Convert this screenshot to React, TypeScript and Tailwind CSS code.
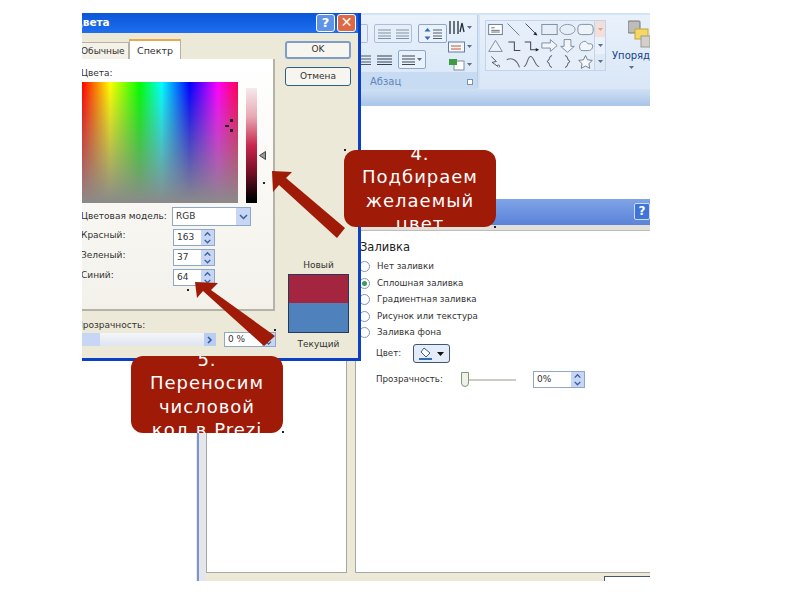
import type { ReactNode } from 'react'

const shapes: ReactNode[] = [
    <><rect x="2" y="2" width="16" height="12" fill="#fff" stroke="#5b6b7d" /><path d="M5 6h4M5 9h10M5 11h10" stroke="#556" /></>,
    <path d="M3 1l14 14" stroke="#5f6f80" />,
    <><path d="M3 1l13 13" stroke="#334" /><path d="M17 15l-5-1 3-3z" fill="#223" /></>,
    <rect x="1" y="2" width="18" height="12" fill="#e6eef8" stroke="#6e8296" />,
    <ellipse cx="10" cy="8" rx="9" ry="6" fill="#e6eef8" stroke="#7d8c9c" />,
    <rect x="1" y="2" width="18" height="12" rx="4" fill="#eef3fa" stroke="#6e8296" />,
    <path d="M10 2l8 13H2z" fill="#eef3fa" stroke="#6e8296" />,
    <path d="M4 4h7v10h7" fill="none" stroke="#445" strokeWidth="1.2" />,
    <><path d="M2 4h7v9h7" fill="none" stroke="#445" strokeWidth="1.2" /><path d="M19 13l-4-2v4z" fill="#223" /></>,
    <path d="M1 5h10V1l8 7-8 7v-4H1z" fill="#f2f6fb" stroke="#6e8296" />,
    <path d="M6 1h8v8h4l-8 7-8-7h4z" fill="#f2f6fb" stroke="#6e8296" />,
    <path d="M3 9c0-4 4-6 7-6l3 3h3c2 0 3 2 2 5-1 2-3 3-5 3H6c-2 0-3-2-3-5z" fill="#f2f6fb" stroke="#6e8296" />,
    <path d="M5 2l6 6-5 1 7 5M12 13c2-2 4 0 2 2" fill="none" stroke="#445" />,
    <path d="M2 6c6-3 12 0 15 9" fill="none" stroke="#667" strokeWidth="1.2" />,
    <path d="M1 14c4 0 4-12 8-12s5 12 10 12" fill="none" stroke="#667" strokeWidth="1.2" />,
    <path d="M13 1c-4 0-2 6-6 7 4 1 2 7 6 7" fill="none" stroke="#445" strokeWidth="1.1" />,
    <path d="M7 1c4 0 2 6 6 7-4 1-2 7-6 7" fill="none" stroke="#445" strokeWidth="1.1" />,
    <path d="M10 1l2.4 5 5.6.7-4 3.8 1 5.5-5-2.7L5 16l1-5.5-4-3.8 5.6-.7z" fill="#f6f8fb" stroke="#5f6f80" />,
]

function Lines({ w = 14, dark = false }: { w?: number; dark?: boolean }) {
    return (
        <svg width={w} height="10" viewBox="0 0 14 10" preserveAspectRatio="none">
            <path d="M0 1h14M0 4h14M0 7h14M0 9.500h14" stroke={dark ? '#33404f' : '#7b8b9c'} />
        </svg>
    )
}

function Caret({ color = '#5c6f87' }: { color?: string }) {
    return (
        <svg width="5" height="3" viewBox="0 0 5 3" className="shrink-0"><path d="M0 0h5L2.500 3z" fill={color} /></svg>
    )
}

function SpinInput({ value, className }: { value: string; className: string }) {
    return (
        <div className={`flex items-center justify-between bg-white border border-[#8fa6c6] ${className}`}>
            <span className="pl-[3px] text-[9px] text-[#333]">{value}</span>
            <div className="flex flex-col h-full w-[13px] bg-[#c6d6f4]">
                <svg className="flex-1" viewBox="0 0 12 8"><path d="M3 6l3-3 3 3" fill="none" stroke="#3c5f96" strokeWidth="1.500" /></svg>
                <svg className="flex-1" viewBox="0 0 12 8"><path d="M3 2l3 3 3-3" fill="none" stroke="#3c5f96" strokeWidth="1.500" /></svg>
            </div>
        </div>
    )
}

function Callout({ className, lines }: { className: string; lines: string[] }) {
    return (
        <div className={`absolute z-30 w-[152px] h-[77px] rounded-[12px] bg-[#a01a08] overflow-hidden flex flex-col items-center justify-center text-white text-[18px] leading-[23.500px] tracking-[1px] text-center ${className}`}>
            {lines.map((l) => (
                <div key={l} className="shrink-0 whitespace-nowrap">{l}</div>
            ))}
        </div>
    )
}

function Speck({ className }: { className: string }) {
    return <div className={`absolute z-40 w-[2px] h-[2px] bg-[#222] ${className}`} />
}

function Ribbon() {
    return (
        <div className="absolute left-[361px] top-[13px] w-[289px] h-[93px] overflow-hidden flex flex-col bg-[#d3e3f6]">
            <div className="h-[76px] flex gap-[2px] pt-[2px]">
                {/* Абзац */}
                <div className="w-[117px] shrink-0 flex flex-col rounded-b-[3px] bg-gradient-to-b from-[#e9f1fb] to-[#d9e7f7] border-r border-[#b9cde6]">
                    <div className="h-[60px] flex">
                        <div className="w-[87px] flex flex-col gap-[7px] pt-[9px]">
                            <div className="flex gap-[6px] h-[19px]">
                                <div className="w-[7px] bg-[#e6eff9] border border-l-0 border-[#a9bed8] rounded-r-[2px]" />
                                <div className="w-[38px] flex items-center justify-around bg-[#e6eff9] border border-[#a9bed8] rounded-[2px]">
                                    <Lines w={13} /><Lines w={13} />
                                </div>
                                <div className="w-[29px] flex items-center justify-center gap-[2px] bg-[#e9f1fb] border border-[#8da7c8] rounded-[2px]">
                                    <svg width="7" height="14" viewBox="0 0 7 14"><path d="M3.500 1l3 3.500H.5zM3.500 13l3-3.500H.5z" fill="#2f6bb5" /></svg>
                                    <Lines w={9} dark />
                                </div>
                            </div>
                            <div className="flex h-[19px] items-center gap-[6px]">
                                <Lines w={10} dark />
                                <Lines w={15} dark />
                                <div className="w-[28px] h-full flex items-center justify-center gap-[2px] bg-[#e9f1fb] border border-[#8da7c8] rounded-[2px]">
                                    <Lines w={13} dark />
                                    <Caret />
                                </div>
                            </div>
                        </div>
                        <div className="flex-1 flex flex-col justify-between pt-[5px] pb-[1px]">
                            <div className="flex items-center gap-[2px]">
                                <svg width="17" height="15" viewBox="0 0 17 15"><path d="M2 1v13M6 1v13M10 1v13M14 3l-2 9M14 3l2 9" stroke="#26303d" strokeWidth="1.300" fill="none" /></svg>
                                <Caret />
                            </div>
                            <div className="flex items-center gap-[2px]">
                                <svg width="17" height="13" viewBox="0 0 17 13"><rect x=".5" y="2" width="16" height="10" fill="#f4f7fb" stroke="#5e7ea6" /><path d="M3 6h10M3 9h10" stroke="#c2592f" /></svg>
                                <Caret />
                            </div>
                            <div className="flex items-center gap-[2px]">
                                <svg width="17" height="14" viewBox="0 0 17 14"><rect x="6" y="4" width="10" height="9" fill="#fff" stroke="#7d8fa3" /><path d="M1 2h8v6H1z" fill="#3e9c43" /></svg>
                                <Caret />
                            </div>
                        </div>
                    </div>
                    <div className="flex-1 flex items-center justify-between pl-[9px] pr-[4px] pt-[2px] bg-[#c7dbf3] text-[10px] text-[#5d87b8]">
                        <span>Абзац</span>
                        <div className="w-[6px] h-[6px] border border-[#7d92ad] bg-white" />
                    </div>
                </div>
                {/* Рисование */}
                <div className="flex-1 min-w-0 flex pl-[5px] pt-[5px] bg-gradient-to-b from-[#e9f1fb] to-[#d9e7f7]">
                    <div className="flex h-[51px] shrink-0">
                        <div className="w-[110px] grid grid-cols-6 bg-[#e5eef9] border border-[#c3d4ea]">
                            {shapes.map((s, i) => (
                                <svg key={i} className="w-[17px] h-[15px] m-auto" viewBox="0 0 20 16">{s}</svg>
                            ))}
                        </div>
                        <div className="w-[11px] flex flex-col items-stretch border border-l-0 border-[#c3d4ea]">
                            <div className="flex-1 bg-[#f3dfd9] flex items-center justify-center"><Caret color="#d9a79a" /></div>
                            <div className="flex-1 bg-[#eaf1fa] flex items-center justify-center"><Caret /></div>
                            <div className="flex-1 bg-[#dfe9f6] flex items-center justify-center"><Caret /></div>
                        </div>
                    </div>
                    <div className="flex-1 min-w-0 pl-[6px] overflow-hidden flex flex-col items-center">
                        <svg className="self-end shrink-0" width="22" height="28" viewBox="0 0 22 28">
                            <rect x="0" y="1" width="12" height="12" rx="1" fill="#bcbcbc" stroke="#777" />
                            <rect x="7" y="9" width="13" height="10" fill="#f4d765" stroke="#c4a634" />
                            <rect x="13" y="16" width="9" height="11" fill="#d3cfc9" stroke="#999" />
                        </svg>
                        <span className="text-[10px] leading-[12px] text-[#15428b] whitespace-nowrap mt-[2px] self-start">Упорядочить</span>
                        <div className="mt-[4px]"><Caret /></div>
                    </div>
                </div>
            </div>
            <div className="flex-1 bg-gradient-to-b from-[#cfe0f5] to-[#a9c5e8]" />
        </div>
    )
}

function FormatWindow() {
    const fills = [
        { label: 'Нет заливки', on: false },
        { label: 'Сплошная заливка', on: true },
        { label: 'Градиентная заливка', on: false },
        { label: 'Рисунок или текстура', on: false },
        { label: 'Заливка фона', on: false },
    ]
    return (
        <div className="absolute left-[196px] top-[199px] w-[454px] h-[382px] flex flex-col overflow-hidden">
            <div className="h-[26px] shrink-0 flex justify-end items-center bg-gradient-to-b from-[#7fa3e6] to-[#5b83d8]">
                <div className="w-[16px] h-[17px] mb-[2px] rounded-[2px] bg-[#3f74d8] border border-[#cfdcf6] text-white text-[12px] font-bold leading-[15px] text-center">?</div>
            </div>
            <div className="h-[6px] shrink-0 bg-[#e2e0d8] border-b border-[#bdbdb5]" />
            <div className="flex-1 flex min-h-0 bg-[#ece9d8] pb-[8px]">
                <div className="w-[9px] border-l-[2px] border-[#7d94d2] bg-[#e4e6ec] ml-[1px] -mb-[8px]" />
                <div className="w-[141px] bg-white border-l border-b border-r border-[#a5a9a0]" />
                <div className="w-[8px]" />
                <div className="flex-1 bg-white border-l border-b border-[#a5a9a0] pl-[4px] pt-[9px] text-[8.700px] text-[#333]">
                    <div className="text-[11.500px] leading-[14px] text-[#222] mb-[7px]">Заливка</div>
                    <div className="flex flex-col gap-[5px]">
                        {fills.map((f) => (
                            <div key={f.label} className="flex items-center gap-[7px] h-[11.500px] -ml-[1px]">
                                <div className="w-[11px] h-[11px] rounded-full bg-white border border-[#8597a8] flex items-center justify-center">
                                    {f.on && <div className="w-[5px] h-[5px] rounded-full bg-[#3f9a55]" />}
                                </div>
                                <span className="whitespace-nowrap">{f.label}</span>
                            </div>
                        ))}
                    </div>
                    <div className="flex items-center mt-[5px] h-[20px] pl-[16px]">
                        <span className="w-[37px]">Цвет:</span>
                        <div className="w-[37px] h-[19px] flex items-center justify-around px-[3px] rounded-[3px] bg-[#e3ecf8] border border-[#43556b]">
                            <svg width="15" height="13" viewBox="0 0 15 13"><path d="M5 1l6 5-4 4-5-5z" fill="#fff" stroke="#3a5f8e" /><path d="M0 11h13v2H0z" fill="#2f6fb5" /></svg>
                            <svg width="7" height="4" viewBox="0 0 7 4"><path d="M0 0h7L3.500 4z" fill="#111" /></svg>
                        </div>
                    </div>
                    <div className="flex items-center mt-[7px] h-[18px] pl-[16px]">
                        <span className="w-[85px] whitespace-nowrap">Прозрачность:</span>
                        <div className="relative w-[55px] h-[2px] bg-[#c9cdc4]">
                            <div className="absolute left-[0px] -top-[7px] w-[8px] h-[15px] bg-[#eef2e8] border border-[#7f9a74] rounded-b-[4px]" />
                        </div>
                        <SpinInput value="0%" className="ml-[17px] w-[52px] h-[17px]" />
                    </div>
                </div>
            </div>
            <div className="absolute right-0 bottom-0 w-[46px] h-[5px] border-t border-l border-[#44586a] bg-white" />
        </div>
    )
}

function ColorDialog() {
    return (
        <div className="absolute z-10 left-[82px] top-[13px] w-[279px] h-[348px] overflow-hidden flex flex-col bg-[#ece9d8] border-r-[3px] border-b-[3px] border-[#0b3fc4] text-[9px] text-[#333]">
            <div className="h-[20px] shrink-0 -mr-[3px] flex items-center justify-between bg-gradient-to-b from-[#0a55d8] to-[#1f6ff0]">
                <span className="-ml-[9px] text-[10.500px] font-bold text-white whitespace-nowrap">Цвета</span>
                <div className="flex gap-[2px] mr-[5px]">
                    <div className="w-[19px] h-[18px] rounded-[3px] bg-[#5f93e8] border border-white text-white text-[13px] font-bold leading-[16px] text-center">?</div>
                    <div className="w-[19px] h-[18px] rounded-[3px] bg-[#dd6a45] border border-white text-white text-[14px] font-bold leading-[15px] text-center">✕</div>
                </div>
            </div>
            <div className="flex-1 relative flex flex-col pt-[6px]">
                <div className="flex h-[20px] items-end">
                    <div className="w-[48px] h-[17px] -ml-[1px] bg-[#f3f1e8] border-r border-t border-[#b6b3a6] whitespace-nowrap leading-[16px]">Обычные</div>
                    <div className="w-[52px] h-[20px] text-center leading-[20px] bg-white border-t-2 border-x border-t-[#e8a84c] border-x-[#b6b3a6] text-[9.500px]">Спектр</div>
                </div>
                <div className="w-[193px] h-[252px] flex flex-col border-r-2 border-b-2 border-[#b5b3a8] bg-gradient-to-b from-white to-[#f3f1ea]">
                    <div className="h-[23px] pt-[9px] -ml-[1px] leading-[11px]">Цвета:</div>
                    <div className="flex h-[121px]">
                        <div className="relative w-[156px] h-[121px] bg-[linear-gradient(to_right,#ff0000_0%,#ffff00_18%,#00ff00_37%,#00ffff_51%,#0000ff_69%,#ff00ff_87%,#ff0050_100%)]">
                            <div className="absolute inset-0 bg-gradient-to-b from-transparent to-[#8a8a8a]" />
                            <div className="absolute left-[143px] top-[37px] w-[9px] h-[14px]">
                                <div className="absolute left-[5px] top-0 w-[3px] h-[3px] bg-[#222]" />
                                <div className="absolute left-0 top-[6px] w-[4px] h-[2px] bg-[#222]" />
                                <div className="absolute left-[5px] top-[10px] w-[3px] h-[3px] bg-[#222]" />
                            </div>
                        </div>
                        <div className="relative ml-[8px] mt-[6px] w-[11px] h-[115px] bg-[linear-gradient(to_bottom,#f6e9ec_0%,#e8a8b4_25%,#c8284c_50%,#7a1026_72%,#000000_97%)]">
                            <svg className="absolute left-[13px] top-[63px]" width="7" height="9" viewBox="0 0 7 9"><path d="M6.500 .5v8L.5 4.500z" fill="#999" stroke="#444" /></svg>
                        </div>
                    </div>
                    <div className="flex items-center justify-between w-[170px] h-[19px] mt-[4px] -ml-[1px]">
                        <span className="whitespace-nowrap">Цветовая модель:</span>
                        <div className="w-[79px] h-[19px] flex items-center justify-between bg-white border border-[#8fa6c6]">
                            <span className="pl-[3px]">RGB</span>
                            <div className="w-[14px] h-full bg-[#c6d6f4] flex items-center justify-center">
                                <svg width="9" height="6" viewBox="0 0 9 6"><path d="M1 1l3.500 3.500L8 1" fill="none" stroke="#3c5f96" strokeWidth="1.500" /></svg>
                            </div>
                        </div>
                    </div>
                    {['Красный:', 'Зеленый:', 'Синий:'].map((l, i) => (
                        <div key={l} className="flex items-start h-[17px] mt-[3px]">
                            <span className="w-[91px] leading-[12px] -ml-[1px] mr-[1px]">{l}</span>
                            <SpinInput value={['163', '37', '64'][i]} className="w-[42px] h-[17px]" />
                        </div>
                    ))}
                </div>
                <div className="mt-[9px] leading-[11px] -ml-[6px] whitespace-nowrap">Прозрачность:</div>
                <div className="flex items-center mt-[1px]">
                    <div className="w-[134px] h-[13px] flex justify-between items-center bg-gradient-to-b from-[#f4f6fa] to-[#dfe4ee]">
                        <div className="w-[18px] h-full bg-[#c6d6f4]" />
                        <div className="w-[12px] h-full bg-[#b9ccf2] flex items-center justify-center">
                            <svg width="6" height="8" viewBox="0 0 6 8"><path d="M1 1l3 3-3 3" fill="none" stroke="#2f5595" strokeWidth="1.500" /></svg>
                        </div>
                    </div>
                    <SpinInput value="0 %" className="ml-[8px] w-[52px] h-[15px]" />
                </div>
                <div className="absolute left-[203px] top-[8px] w-[66px] h-[18px] flex items-center justify-center rounded-[3px] bg-[#f6f5ef] border-2 border-[#7f9dcb]">OK</div>
                <div className="absolute left-[203px] top-[34px] w-[66px] h-[19px] flex items-center justify-center rounded-[3px] bg-[#f6f5ef] border border-[#2f5f80]">Отмена</div>
                <div className="absolute left-[206px] top-[227px] w-[61px] flex flex-col items-center">
                    <span className="leading-[11px] mb-[3px]">Новый</span>
                    <div className="w-full h-[59px] flex flex-col border border-[#243a5a]">
                        <div className="h-[28px] bg-[#a32540]" />
                        <div className="flex-1 bg-[#4f81bd]" />
                    </div>
                    <span className="leading-[11px] mt-[6px] whitespace-nowrap">Текущий</span>
                </div>
            </div>
        </div>
    )
}

export default function App() {
    return (
        <div className="relative w-[800px] h-[600px] bg-white overflow-hidden font-['DejaVu_Sans',sans-serif]">
            <Ribbon />
            <FormatWindow />
            <ColorDialog />

            {/* arrows drawn over the screenshot */}
            <svg className="absolute z-20 left-0 top-0" width="800" height="600" viewBox="0 0 800 600">
                <path d="M272 171L292 172L286 178L345 228L337 238L279 185L273 192Z" fill="#a01a08" />
                <path d="M195 282L218 283L211 290L275 336L264 346L203 291L197 298Z" fill="#a01a08" />
            </svg>

            <Callout className="left-[344px] top-[150px]" lines={['4.', 'Подбираем', 'желаемый', 'цвет']} />
            <Callout className="left-[131px] top-[356px]" lines={['5.', 'Переносим', 'числовой', 'код в Prezi']} />

            <Speck className="left-[263px] top-[182px]" />
            <Speck className="left-[187px] top-[289px]" />
            <Speck className="left-[274px] top-[329px]" />
            <Speck className="left-[282px] top-[431px]" />
            <Speck className="left-[344px] top-[149px]" />
            <Speck className="left-[494px] top-[226px]" />
        </div>
    )
}
